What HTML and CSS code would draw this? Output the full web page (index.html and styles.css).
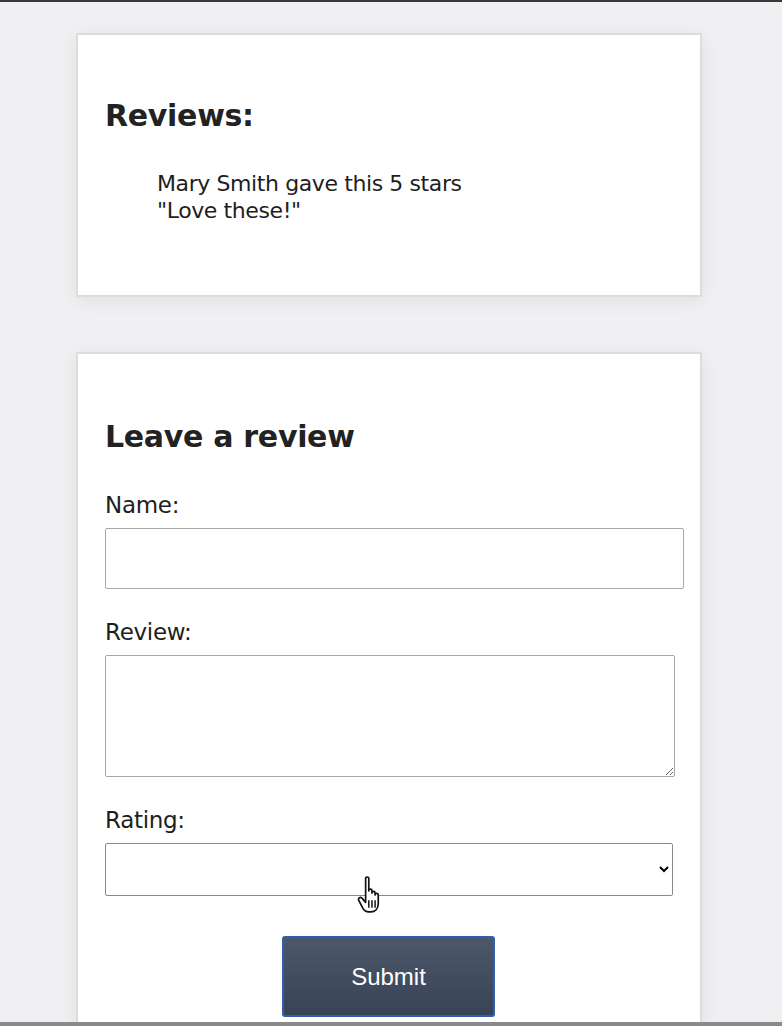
FILE: index.html
```html
<!DOCTYPE html>
<html lang="en">
<head>
  <meta charset="UTF-8" />
  <meta name="viewport" content="width=device-width, initial-scale=1.0"/>
  <title>Reviews</title>
  <link rel="stylesheet" href="styles.css">
</head>
<body>
  <div class="page">
    <section class="card reviews">
      <h2>Reviews:</h2>
      <ul class="review-list">
        <li>
          <p>Mary Smith gave this 5 stars</p>
          <p>"Love these!"</p>
        </li>
      </ul>
    </section>

    <section class="card leave">
      <h2>Leave a review</h2>
      <form id="reviewForm">
        <label for="name">Name:</label>
        <input type="text" id="name" class="name-input" />

        <label for="review">Review:</label>
        <textarea id="review" class="review-input"></textarea>

        <label for="rating">Rating:</label>
        <div class="select-wrap">
          <select id="rating" class="rating-input">
            <option value=""></option>
            <option value="5">5</option>
            <option value="4">4</option>
            <option value="3">3</option>
            <option value="2">2</option>
            <option value="1">1</option>
          </select>
          <svg class="cursor" width="32" height="40" viewBox="0 0 30 38">
            <path d="M8 3 C8 1.5 11 1.5 11 3 L11 15 C11 13 14 13 14 15 L14 17 C14 15 17 15 17 17 L17 19 C17 17 20 17 20 19 L20 27 C20 32 17 35 13 35 L11 35 C8 35 6 33 5 31 L1.5 24 C0.5 22 3 20.5 4.5 22 L8 26 Z"
                  fill="#fff" stroke="#111" stroke-width="1.6" stroke-linejoin="round"/>
            <path d="M11 24 L11 31 M14 24 L14 31 M17 24 L17 31" stroke="#111" stroke-width="1.4"/>
          </svg>
        </div>

        <div class="actions">
          <button type="submit">Submit</button>
        </div>
      </form>
    </section>
  </div>
</body>
</html>
```

FILE: styles.css
```css
html, body {
  margin: 0;
  height: 100%;
}
body {
  font-family: "DejaVu Sans", Verdana, sans-serif;
  color: #1e1e1e;
  background: #f0f0f2;
  border-top: 2px solid #3a3a3a;
  border-bottom: 4px solid #8a8a8a;
  box-sizing: border-box;
  overflow: hidden;
}
.page {
  width: 626px;
  margin-left: 76px;
  padding-top: 31px;
}
.card {
  background: #fff;
  border: 2px solid #dcdcdc;
  box-shadow: 0 4px 18px rgba(0, 0, 0, 0.07);
  padding: 0 16px 0 27px;
  margin-bottom: 55px;
}
.reviews {
  height: 260px;
}
.leave {
  padding-bottom: 8px;
  margin-bottom: 0;
}
h2 {
  font-size: 30px;
  font-weight: bold;
  letter-spacing: -0.3px;
  margin: 0;
  color: #222;
}
.reviews h2 {
  padding-top: 63px;
}
.leave h2 {
  padding-top: 65px;
}
.review-list {
  list-style: none;
  margin: 37px 0 0 52px;
  padding: 0;
  font-size: 22px;
  letter-spacing: -0.4px;
  line-height: 27px;
}
.review-list p {
  margin: 0;
}
form {
  padding-top: 8px;
}
label {
  display: block;
  font-size: 23px;
  letter-spacing: -0.3px;
  margin-top: 30px;
  margin-bottom: 10px;
}
.name-input, .review-input, .rating-input {
  display: block;
  box-sizing: border-box;
  border: 1px solid #a8a8a8;
  border-radius: 2px;
  background: #fff;
  font-family: inherit;
  font-size: 18px;
  margin: 0;
}
.name-input {
  width: 579px;
  height: 61px;
}
.review-input {
  width: 570px;
  height: 122px;
  resize: vertical;
}
.rating-label {
  margin-top: 31px;
}
.select-wrap {
  position: relative;
}
.rating-input {
  width: 568px;
  height: 53px;
  border-color: #8a8a8a;
}
.cursor {
  position: absolute;
  left: 252px;
  top: 32px;
}
.actions {
  display: flex;
  padding-left: 177px;
  margin-top: 40px;
}
button {
  width: 213px;
  height: 81px;
  background: linear-gradient(#4c5769, #394356);
  color: #fff;
  border: 2px solid #2f5fae;
  border-radius: 3px;
  font-family: "Liberation Sans", Arial, sans-serif;
  font-size: 24px;
}
```
